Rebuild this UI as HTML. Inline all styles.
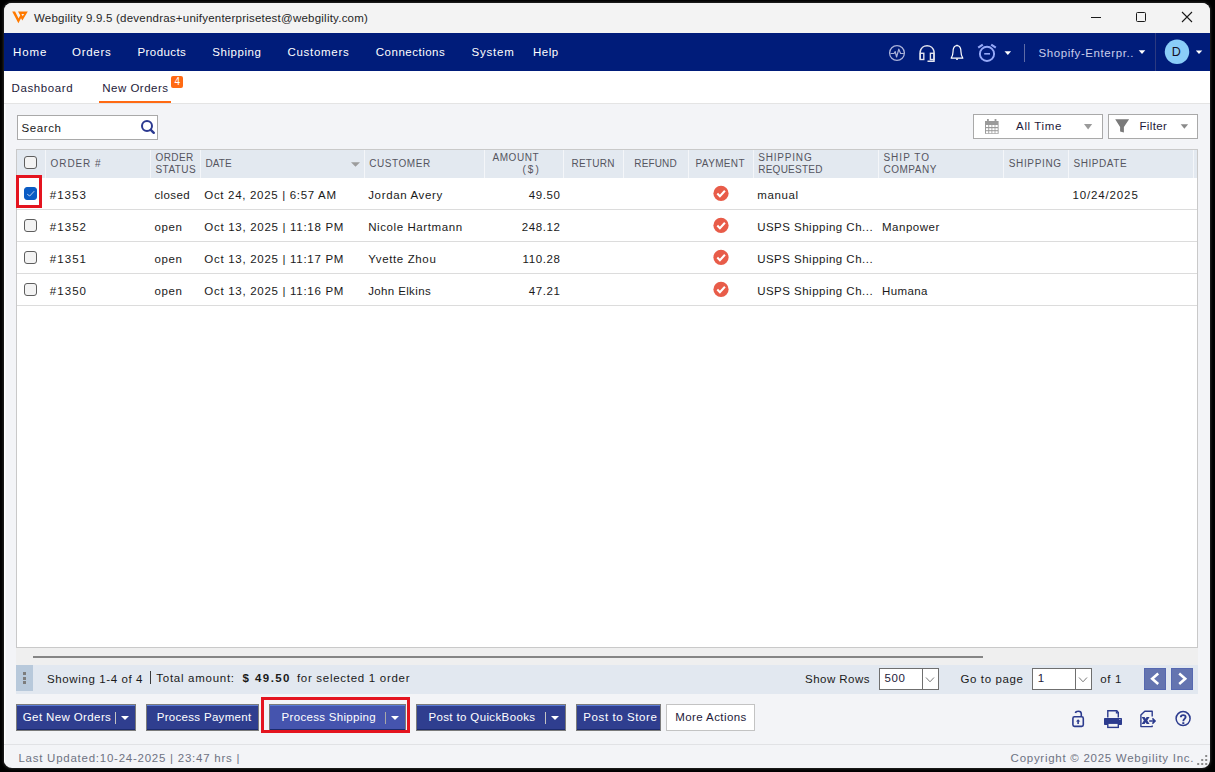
<!DOCTYPE html>
<html><head><meta charset="utf-8">
<style>
*{margin:0;padding:0;box-sizing:border-box}
html,body{width:1215px;height:772px;overflow:hidden;background:#000}
.shadow{position:absolute;left:4px;top:3px;width:1206px;height:765px;border-radius:8px;box-shadow:0 0 2.5px 0.5px rgba(70,70,70,.55)}
body{position:relative;font-family:"Liberation Sans",sans-serif}
.win{position:absolute;left:4px;top:3px;width:1206px;height:765px;border-radius:8px;overflow:hidden;background:#f3f4f7}
.in{position:absolute;left:-4px;top:-3px;width:1215px;height:772px}
.a{position:absolute}
.t{position:absolute;white-space:nowrap;line-height:1}
.btn{position:absolute;top:704px;height:27px;background:#2f3e8f;border:1px solid #7b7b7b;box-shadow:inset 0 1px 0 #5a7bd6,inset 0 -1px 0 #1c2a6c}
.cb{position:absolute;left:24px;width:13px;height:13px;border:1.3px solid #5e5e5e;border-radius:3px;background:#f3f3f3}
.vsep{position:absolute;top:150px;height:28px;width:1px;background:#f4f6f9}
.hl{position:absolute;left:17px;width:1180px;height:1px;background:#dcdcdc}
.car{position:absolute;width:0;height:0;border-left:4px solid transparent;border-right:4px solid transparent;border-top:4.6px solid #fff}
</style></head><body>
<div class="shadow"></div>
<div class="win"><div class="in">
<!-- title bar -->
<div class="a" style="left:0;top:0;width:1215px;height:33px;background:#f3f3f3"></div>
<svg class="a" style="left:0;top:0" width="40" height="33" viewBox="0 0 40 33">
 <path d="M12.2 11.5 L15.1 11.5 L18.6 18.4 L20.2 15.3 L18 11.5 L27.8 11.5 L22.4 20.6 L21 18.2 L18.4 23.2 Z" fill="#ff7a00"/>
 <path d="M21.4 14.1 L24.1 14.1 L22.7 16.3 Z" fill="#f3f3f3"/>
</svg>
<!-- window controls -->
<div class="a" style="left:1091px;top:17px;width:10px;height:1px;background:#1a1a1a"></div>
<div class="a" style="left:1136px;top:12px;width:10px;height:10px;border:1px solid #1a1a1a;border-radius:1.5px"></div>
<svg class="a" style="left:1180px;top:10px" width="14" height="14" viewBox="0 0 14 14"><path d="M2 2 L12 12 M12 2 L2 12" stroke="#1a1a1a" stroke-width="1.1"/></svg>
<!-- nav bar -->
<div class="a" style="left:0;top:33px;width:1215px;height:38px;background:#001c7a"></div>
<svg class="a" style="left:880px;top:33px" width="335" height="38" viewBox="880 33 335 38">
 <circle cx="897" cy="53" r="7.4" fill="none" stroke="#aab2d9" stroke-width="1.3"/>
 <path d="M890.5 53.5 L894 53.5 L895.2 51.6 L896.6 57 L898.8 49.2 L900.6 53.5 L903.8 53.5" fill="none" stroke="#aab2d9" stroke-width="1.2" stroke-linejoin="round"/>
 <path d="M920.2 59.5 L920.2 51.5 A7 7 0 0 1 934 51.5 L934 61.3 L927.5 61.3" fill="none" stroke="#e2e3ee" stroke-width="1.5"/>
 <rect x="920.2" y="53.3" width="3.6" height="6.2" fill="none" stroke="#e2e3ee" stroke-width="1.4"/>
 <rect x="930.4" y="53.3" width="3.6" height="6.2" fill="none" stroke="#e2e3ee" stroke-width="1.4"/>
 <path d="M957 45.6 C953.5 45.6 953 49 953 52 C953 55 952 57 951.2 58.2 L962.8 58.2 C962 57 961 55 961 52 C961 49 960.5 45.6 957 45.6 Z" fill="none" stroke="#ffffff" stroke-width="1.2" stroke-linejoin="round"/>
 <path d="M957 58.5 L957 60" stroke="#fff" stroke-width="1.6"/><path d="M957 44.8 L957 46" stroke="#fff" stroke-width="1.4"/>
 <circle cx="987" cy="53.9" r="7.1" fill="none" stroke="#95a9f8" stroke-width="1.9"/>
 <rect x="984.2" y="53" width="5.8" height="1.6" fill="#93a7f7"/>
 <path d="M978.2 47.6 L982.8 44.6 M991.2 44.6 L995.8 47.6" stroke="#93a7f7" stroke-width="2.2"/>
 <path d="M1004.5 51.3 L1011.1 51.3 L1007.8 55.1 Z" fill="#fff"/>
 <rect x="1024" y="44" width="1" height="18" fill="#5e6ba6"/>
 <path d="M1138.7 50.3 L1145.3 50.3 L1142 54 Z" fill="#fff"/>
 <rect x="1155" y="33" width="1" height="38" fill="#2c3a80"/>
 <circle cx="1177" cy="51.8" r="12.25" fill="#8acdf8"/>
 <path d="M1195.8 50.6 L1202.3 50.6 L1199 54.1 Z" fill="#fff"/>
</svg>
<!-- tab bar -->
<div class="a" style="left:0;top:71px;width:1215px;height:32px;background:#fff"></div>
<div class="a" style="left:0;top:103px;width:1215px;height:1px;background:#e4e4e4"></div>
<div class="a" style="left:99px;top:101px;width:72px;height:2px;background:#ff6a13"></div>
<div class="a" style="left:171px;top:76px;width:12px;height:12px;background:#ff6a13;border-radius:2px"></div>
<!-- search -->
<div class="a" style="left:17px;top:115px;width:141px;height:25px;border:1px solid #a9a9a9;background:#fff"></div>
<svg class="a" style="left:135px;top:115px" width="25" height="25" viewBox="135 115 25 25">
 <circle cx="147" cy="126" r="5" fill="none" stroke="#2b3990" stroke-width="2"/>
 <path d="M150.8 129.8 L153.8 132.8" stroke="#2b3990" stroke-width="2.4" stroke-linecap="round"/>
</svg>
<!-- all time / filter -->
<div class="a" style="left:973px;top:114px;width:130px;height:25px;border:1px solid #a9a9a9;background:#fff"></div>
<div class="a" style="left:1108px;top:114px;width:90px;height:25px;border:1px solid #a9a9a9;background:#fff"></div>
<svg class="a" style="left:980px;top:114px" width="220" height="25" viewBox="980 114 220 25">
 <rect x="985" y="121" width="13.6" height="12.8" fill="#9a9a9a"/>
 <rect x="987" y="119" width="1.8" height="3" fill="#9a9a9a"/><rect x="994.6" y="119" width="1.8" height="3" fill="#9a9a9a"/>
 <g fill="#fff">
  <rect x="986" y="125" width="2.3" height="2"/><rect x="989.2" y="125" width="2.3" height="2"/><rect x="992.3" y="125" width="2.3" height="2"/><rect x="995.4" y="125" width="2.3" height="2"/>
  <rect x="986" y="128.2" width="2.3" height="2"/><rect x="989.2" y="128.2" width="2.3" height="2"/><rect x="992.3" y="128.2" width="2.3" height="2"/><rect x="995.4" y="128.2" width="2.3" height="2"/>
  <rect x="986" y="131.2" width="2.3" height="2"/><rect x="989.2" y="131.2" width="2.3" height="2"/><rect x="992.3" y="131.2" width="2.3" height="2"/><rect x="995.4" y="131.2" width="2.3" height="2"/>
 </g>
 <path d="M1084 124 L1092.2 124 L1088.1 129.5 Z" fill="#9a9a9a"/>
 <path d="M1115.2 119.2 L1129.1 119.2 L1123.9 126.9 L1123.9 132.6 L1120.1 131.6 L1120.1 126.9 Z" fill="#7a7a7a"/>
 <path d="M1180.7 124.3 L1188.1 124.3 L1184.4 128.8 Z" fill="#8a8a8a"/>
</svg>
<!-- table -->
<div class="a" style="left:16px;top:149px;width:1182px;height:499px;border:1px solid #c9c9c9;background:#fff"></div>
<div class="a" style="left:17px;top:150px;width:1180px;height:28px;background:#e3e9f0"></div>
<div class="vsep" style="left:45px"></div><div class="vsep" style="left:150px"></div><div class="vsep" style="left:200px"></div>
<div class="vsep" style="left:364px"></div><div class="vsep" style="left:484px"></div><div class="vsep" style="left:563px"></div>
<div class="vsep" style="left:623px"></div><div class="vsep" style="left:688px"></div><div class="vsep" style="left:753px"></div>
<div class="vsep" style="left:878px"></div><div class="vsep" style="left:1003px"></div><div class="vsep" style="left:1068px"></div>
<div class="vsep" style="left:1193px"></div>
<svg class="a" style="left:350px;top:160px" width="12" height="8" viewBox="350 160 12 8"><path d="M351 162.2 L360 162.2 L355.5 166.8 Z" fill="#9c9c9c"/></svg>
<div class="hl" style="top:209px"></div><div class="hl" style="top:241px"></div><div class="hl" style="top:273px"></div><div class="hl" style="top:305px"></div>
<div class="cb" style="top:156px"></div>
<div class="cb" style="top:187px;background:#0b5cc4;border-color:#0b5cc4"></div>
<svg class="a" style="left:24px;top:187px" width="13" height="13" viewBox="24 187 13 13"><path d="M27.2 194.2 L29.7 196 L34.2 191.2" fill="none" stroke="#cfdcf3" stroke-width="0.9"/></svg>
<div class="cb" style="top:219px"></div><div class="cb" style="top:251px"></div><div class="cb" style="top:283px"></div>
<div class="a" style="left:16px;top:175px;width:26px;height:33px;border:3px solid #e4141f"></div>
<svg class="a" style="left:705px;top:178px" width="32" height="128" viewBox="705 178 32 128">
 <g transform="translate(0 0)"><circle cx="721" cy="193.4" r="7.6" fill="#e85c49"/><path d="M717.3 193.6 L719.9 196.2 L724.9 190.8" fill="none" stroke="#fff" stroke-width="2.1"/></g>
 <g transform="translate(0 32)"><circle cx="721" cy="193.4" r="7.6" fill="#e85c49"/><path d="M717.3 193.6 L719.9 196.2 L724.9 190.8" fill="none" stroke="#fff" stroke-width="2.1"/></g>
 <g transform="translate(0 64)"><circle cx="721" cy="193.4" r="7.6" fill="#e85c49"/><path d="M717.3 193.6 L719.9 196.2 L724.9 190.8" fill="none" stroke="#fff" stroke-width="2.1"/></g>
 <g transform="translate(0 96)"><circle cx="721" cy="193.4" r="7.6" fill="#e85c49"/><path d="M717.3 193.6 L719.9 196.2 L724.9 190.8" fill="none" stroke="#fff" stroke-width="2.1"/></g>
 
</svg>
<!-- below table strip + scrollbar -->
<div class="a" style="left:16px;top:648px;width:1182px;height:17px;background:#efefef"></div>
<div class="a" style="left:33px;top:655.6px;width:950px;height:2.4px;background:#858585"></div>
<!-- status bar -->
<div class="a" style="left:16px;top:665px;width:1182px;height:29px;background:#e2e8f0"></div>
<div class="a" style="left:16px;top:665px;width:17px;height:26px;background:#b8c9db"></div>
<div class="a" style="left:23px;top:672px;width:3px;height:3px;background:#7d7d7d"></div>
<div class="a" style="left:23px;top:677px;width:3px;height:3px;background:#7d7d7d"></div>
<div class="a" style="left:23px;top:681px;width:3px;height:3px;background:#7d7d7d"></div>
<div class="a" style="left:150px;top:671px;width:1px;height:13px;background:#3a3a3a"></div>
<div class="a" style="left:879px;top:668px;width:60px;height:22px;border:1px solid #6f6f6f;background:#fff"></div>
<div class="a" style="left:922px;top:668px;width:1px;height:22px;background:#6f6f6f"></div>
<div class="a" style="left:1032px;top:668px;width:60px;height:22px;border:1px solid #6f6f6f;background:#fff"></div>
<div class="a" style="left:1075px;top:668px;width:1px;height:22px;background:#6f6f6f"></div>
<svg class="a" style="left:920px;top:670px" width="180" height="20" viewBox="920 670 180 20">
 <path d="M926 677.5 L930 681.8 L934 677.5" fill="none" stroke="#7a7a7a" stroke-width="1"/>
 <path d="M1079 677.5 L1083 681.8 L1087 677.5" fill="none" stroke="#7a7a7a" stroke-width="1"/>
</svg>
<div class="a" style="left:1144px;top:668px;width:22px;height:22px;background:#6474b0;border:1px solid #5668b0"></div>
<div class="a" style="left:1171px;top:668px;width:22px;height:22px;background:#6474b0;border:1px solid #5668b0"></div>
<svg class="a" style="left:1144px;top:668px" width="50" height="22" viewBox="1144 668 50 22">
 <path d="M1158.2 673.6 L1152.2 678.8 L1158.2 684" fill="none" stroke="#fff" stroke-width="2.6"/>
 <path d="M1179.2 673.6 L1185.2 678.8 L1179.2 684" fill="none" stroke="#fff" stroke-width="2.6"/>
</svg>
<!-- buttons -->
<div class="btn" style="left:16px;width:120px"></div>
<div class="btn" style="left:146px;width:113px"></div>
<div class="btn" style="left:269px;width:137px;background:#4554ae"></div>
<div class="btn" style="left:416px;width:150px"></div>
<div class="btn" style="left:576px;width:85px"></div>
<div class="a" style="left:666px;top:704px;width:89px;height:27px;background:#fff;border:1px solid #c3c3c3"></div>
<div class="a" style="left:115px;top:712px;width:1px;height:12px;background:#c4c4c4"></div>
<div class="a" style="left:385px;top:712px;width:1px;height:12px;background:#a8a8a8"></div>
<div class="a" style="left:545px;top:712px;width:1px;height:12px;background:#c4c4c4"></div>
<div class="car" style="left:121.4px;top:715.8px"></div>
<div class="car" style="left:391.4px;top:716px"></div>
<div class="car" style="left:551.3px;top:715.8px"></div>
<div class="a" style="left:261px;top:697px;width:149px;height:36px;border:3px solid #e4141f"></div>
<!-- right icons -->
<svg class="a" style="left:1065px;top:705px" width="135" height="28" viewBox="1065 705 135 28">
 <g fill="none" stroke="#2c3b8e">
  <rect x="1072.9" y="716.8" width="10.4" height="9.6" rx="1.6" stroke-width="1.6"/>
  <path d="M1075.4 713 Q1075.8 711.2 1078.4 711.2 Q1081.3 711.2 1081.3 713.8 L1081.3 716.6" stroke-width="1.6"/>
 </g>
 <path d="M1078.1 719.2 L1080.3 721.4 L1078.9 721.4 L1078.9 724 L1077.3 724 L1077.3 721.4 L1075.9 721.4 Z" fill="#2c3b8e"/>
 <path d="M1107.8 717.5 L1107.8 710.8 L1116.8 710.8 L1118.3 712.6 L1118.3 717.5" fill="none" stroke="#2c3b8e" stroke-width="1.4"/>
 <path d="M1115.8 710.6 L1118.6 713.6 L1115.8 713.6 Z" fill="#2c3b8e"/>
 <rect x="1104" y="718" width="18" height="7" rx="0.8" fill="#2c3b8e"/>
 <rect x="1107.8" y="723.2" width="10.5" height="4.2" fill="#f2f3f5" stroke="#2c3b8e" stroke-width="1.4"/>
 <rect x="1119" y="719" width="1.6" height="1" fill="#8c97c8"/>
 <path d="M1152.2 716.4 L1152.2 711.2 L1144.8 711.2 L1140.9 715 L1140.9 726.6 L1152.2 726.6 L1152.2 725.6" fill="none" stroke="#2c3b8e" stroke-width="1.4" stroke-linejoin="round"/>
 <path d="M1141.6 717 L1144.6 717 L1145.6 718.8 L1146.6 717 L1149.6 717 L1147.3 720.5 L1149.6 724 L1146.6 724 L1145.6 722.2 L1144.6 724 L1141.6 724 L1143.9 720.5 Z" fill="#2c3b8e"/>
 <path d="M1149.2 721 L1154.8 721 M1152.4 718.4 L1155.1 721 L1152.4 723.6" fill="none" stroke="#2c3b8e" stroke-width="1.5"/>
 <circle cx="1183.1" cy="718.6" r="7" fill="none" stroke="#2c3b8e" stroke-width="1.5"/>
 <path d="M1180.8 717.3 C1180.8 714.4 1185.6 714.4 1185.6 717 C1185.6 718.8 1183.3 719 1183.3 721.2" fill="none" stroke="#2c3b8e" stroke-width="1.9"/>
 <rect x="1182.3" y="722.2" width="2" height="1.8" fill="#2c3b8e"/>
</svg>
<!-- footer -->
<div class="a" style="left:4px;top:104px;width:1px;height:664px;background:#ffffff"></div>
<div class="a" style="left:5px;top:104px;width:1px;height:640px;background:#f8f9fa"></div>
<div class="a" style="left:0;top:744px;width:1215px;height:1px;background:#e1e2e5"></div>
<svg class="a" style="left:1196px;top:754px" width="14" height="14" viewBox="1196 754 14 14">
 <g fill="#8a8a8a"><rect x="1205.2" y="755" width="2" height="2"/><rect x="1201.2" y="759" width="2" height="2"/><rect x="1205.2" y="759" width="2" height="2"/><rect x="1197.2" y="763" width="2" height="2"/><rect x="1201.2" y="763" width="2" height="2"/><rect x="1205.2" y="763" width="2" height="2"/></g>
</svg>
<div class="t" style="left:34.00px;top:13.00px;font-size:11.5px;letter-spacing:0.226px;color:#262626">Webgility 9.9.5 (devendras+unifyenterprisetest@webgility.com)</div>
<div class="t" style="left:13.00px;top:47.00px;font-size:11.5px;letter-spacing:0.907px;color:#ffffff">Home</div>
<div class="t" style="left:72.00px;top:47.00px;font-size:11.5px;letter-spacing:0.721px;color:#ffffff">Orders</div>
<div class="t" style="left:137.50px;top:47.00px;font-size:11.5px;letter-spacing:0.410px;color:#ffffff">Products</div>
<div class="t" style="left:212.30px;top:47.00px;font-size:11.5px;letter-spacing:0.548px;color:#ffffff">Shipping</div>
<div class="t" style="left:287.40px;top:47.00px;font-size:11.5px;letter-spacing:0.719px;color:#ffffff">Customers</div>
<div class="t" style="left:375.80px;top:47.00px;font-size:11.5px;letter-spacing:0.502px;color:#ffffff">Connections</div>
<div class="t" style="left:471.40px;top:47.00px;font-size:11.5px;letter-spacing:0.828px;color:#ffffff">System</div>
<div class="t" style="left:533.00px;top:47.00px;font-size:11.5px;letter-spacing:0.515px;color:#ffffff">Help</div>
<div class="t" style="left:1038.50px;top:48.00px;font-size:11.5px;letter-spacing:0.578px;color:#c9cdeb">Shopify-Enterpr..</div>
<div class="t" style="left:1171.70px;top:46.00px;font-size:12.5px;letter-spacing:0.000px;color:#150f25">D</div>
<div class="t" style="left:174.50px;top:77.00px;font-size:10px;letter-spacing:0.529px;color:#ffffff">4</div>
<div class="t" style="left:11.50px;top:83.00px;font-size:11.5px;letter-spacing:0.617px;color:#1e1a3a">Dashboard</div>
<div class="t" style="left:102.20px;top:83.00px;font-size:11.5px;letter-spacing:0.500px;color:#1e1a3a">New Orders</div>
<div class="t" style="left:21.60px;top:123.00px;font-size:11.5px;letter-spacing:0.572px;color:#1a1a1a">Search</div>
<div class="t" style="left:1016.10px;top:121.00px;font-size:11.5px;letter-spacing:0.613px;color:#1e1a3a">All Time</div>
<div class="t" style="left:1139.40px;top:121.00px;font-size:11.5px;letter-spacing:0.375px;color:#1e1a3a">Filter</div>
<div class="t" style="left:50.60px;top:159.00px;font-size:10px;letter-spacing:0.901px;color:#55555f">ORDER #</div>
<div class="t" style="left:155.50px;top:153.00px;font-size:10px;letter-spacing:0.402px;color:#55555f">ORDER</div>
<div class="t" style="left:155.50px;top:165.00px;font-size:10px;letter-spacing:0.441px;color:#55555f">STATUS</div>
<div class="t" style="left:205.60px;top:159.00px;font-size:10px;letter-spacing:0.047px;color:#55555f">DATE</div>
<div class="t" style="left:369.20px;top:159.00px;font-size:10px;letter-spacing:0.569px;color:#55555f">CUSTOMER</div>
<div class="t" style="left:492.40px;top:153.00px;font-size:10px;letter-spacing:0.576px;color:#55555f">AMOUNT</div>
<div class="t" style="left:522.40px;top:165.00px;font-size:10px;letter-spacing:2.104px;color:#55555f">($)</div>
<div class="t" style="left:571.40px;top:159.00px;font-size:10px;letter-spacing:0.291px;color:#55555f">RETURN</div>
<div class="t" style="left:634.30px;top:159.00px;font-size:10px;letter-spacing:0.151px;color:#55555f">REFUND</div>
<div class="t" style="left:695.60px;top:159.00px;font-size:10px;letter-spacing:0.342px;color:#55555f">PAYMENT</div>
<div class="t" style="left:758.20px;top:153.00px;font-size:10px;letter-spacing:0.813px;color:#55555f">SHIPPING</div>
<div class="t" style="left:758.20px;top:165.00px;font-size:10px;letter-spacing:0.261px;color:#55555f">REQUESTED</div>
<div class="t" style="left:883.40px;top:153.00px;font-size:10px;letter-spacing:1.042px;color:#55555f">SHIP TO</div>
<div class="t" style="left:883.40px;top:165.00px;font-size:10px;letter-spacing:0.525px;color:#55555f">COMPANY</div>
<div class="t" style="left:1008.70px;top:159.00px;font-size:10px;letter-spacing:0.656px;color:#55555f">SHIPPING</div>
<div class="t" style="left:1073.60px;top:159.00px;font-size:10px;letter-spacing:0.529px;color:#55555f">SHIPDATE</div>
<div class="t" style="left:49.80px;top:190.00px;font-size:11.5px;letter-spacing:1.004px;color:#1a1a1a">#1353</div>
<div class="t" style="left:154.40px;top:190.00px;font-size:11.5px;letter-spacing:0.391px;color:#1a1a1a">closed</div>
<div class="t" style="left:204.30px;top:190.00px;font-size:11.5px;letter-spacing:0.682px;color:#1a1a1a">Oct 24, 2025 | 6:57 AM</div>
<div class="t" style="left:368.20px;top:190.00px;font-size:11.5px;letter-spacing:0.655px;color:#1a1a1a">Jordan Avery</div>
<div class="t" style="left:528.76px;top:190.00px;font-size:11.5px;letter-spacing:0.613px;color:#1a1a1a">49.50</div>
<div class="t" style="left:757.20px;top:190.00px;font-size:11.5px;letter-spacing:0.613px;color:#1a1a1a">manual</div>
<div class="t" style="left:1072.40px;top:190.00px;font-size:11.5px;letter-spacing:0.871px;color:#1a1a1a">10/24/2025</div>
<div class="t" style="left:49.80px;top:222.00px;font-size:11.5px;letter-spacing:1.054px;color:#1a1a1a">#1352</div>
<div class="t" style="left:154.40px;top:222.00px;font-size:11.5px;letter-spacing:0.638px;color:#1a1a1a">open</div>
<div class="t" style="left:204.30px;top:222.00px;font-size:11.5px;letter-spacing:0.704px;color:#1a1a1a">Oct 13, 2025 | 11:18 PM</div>
<div class="t" style="left:368.20px;top:222.00px;font-size:11.5px;letter-spacing:0.589px;color:#1a1a1a">Nicole Hartmann</div>
<div class="t" style="left:521.76px;top:222.00px;font-size:11.5px;letter-spacing:0.613px;color:#1a1a1a">248.12</div>
<div class="t" style="left:757.20px;top:222.00px;font-size:11.5px;letter-spacing:0.480px;color:#1a1a1a">USPS Shipping Ch...</div>
<div class="t" style="left:882.00px;top:222.00px;font-size:11.5px;letter-spacing:0.520px;color:#1a1a1a">Manpower</div>
<div class="t" style="left:49.80px;top:254.00px;font-size:11.5px;letter-spacing:1.054px;color:#1a1a1a">#1351</div>
<div class="t" style="left:154.40px;top:254.00px;font-size:11.5px;letter-spacing:0.638px;color:#1a1a1a">open</div>
<div class="t" style="left:204.30px;top:254.00px;font-size:11.5px;letter-spacing:0.704px;color:#1a1a1a">Oct 13, 2025 | 11:17 PM</div>
<div class="t" style="left:368.20px;top:254.00px;font-size:11.5px;letter-spacing:0.622px;color:#1a1a1a">Yvette Zhou</div>
<div class="t" style="left:522.61px;top:254.00px;font-size:11.5px;letter-spacing:0.613px;color:#1a1a1a">110.28</div>
<div class="t" style="left:757.20px;top:254.00px;font-size:11.5px;letter-spacing:0.480px;color:#1a1a1a">USPS Shipping Ch...</div>
<div class="t" style="left:49.80px;top:286.00px;font-size:11.5px;letter-spacing:1.054px;color:#1a1a1a">#1350</div>
<div class="t" style="left:154.40px;top:286.00px;font-size:11.5px;letter-spacing:0.638px;color:#1a1a1a">open</div>
<div class="t" style="left:204.30px;top:286.00px;font-size:11.5px;letter-spacing:0.704px;color:#1a1a1a">Oct 13, 2025 | 11:16 PM</div>
<div class="t" style="left:368.20px;top:286.00px;font-size:11.5px;letter-spacing:0.364px;color:#1a1a1a">John Elkins</div>
<div class="t" style="left:528.76px;top:286.00px;font-size:11.5px;letter-spacing:0.613px;color:#1a1a1a">47.21</div>
<div class="t" style="left:757.20px;top:286.00px;font-size:11.5px;letter-spacing:0.480px;color:#1a1a1a">USPS Shipping Ch...</div>
<div class="t" style="left:882.00px;top:286.00px;font-size:11.5px;letter-spacing:0.386px;color:#1a1a1a">Humana</div>
<div class="t" style="left:47.00px;top:674.00px;font-size:11.5px;letter-spacing:0.613px;color:#1a1a1a">Showing 1-4 of 4</div>
<div class="t" style="left:156.30px;top:673.00px;font-size:11.5px;letter-spacing:0.721px;color:#1a1a1a">Total amount:</div>
<div class="t" style="left:242.50px;top:673.00px;font-size:11.5px;letter-spacing:1.438px;color:#1a1a1a;font-weight:bold">$ 49.50</div>
<div class="t" style="left:296.90px;top:673.00px;font-size:11.5px;letter-spacing:0.713px;color:#1a1a1a">for selected 1 order</div>
<div class="t" style="left:805.10px;top:674.00px;font-size:11.5px;letter-spacing:0.454px;color:#1a1a1a">Show Rows</div>
<div class="t" style="left:884.40px;top:673.00px;font-size:11.5px;letter-spacing:0.604px;color:#1e1a3a">500</div>
<div class="t" style="left:960.40px;top:674.00px;font-size:11.5px;letter-spacing:0.632px;color:#1a1a1a">Go to page</div>
<div class="t" style="left:1037.70px;top:673.00px;font-size:11.5px;letter-spacing:0.613px;color:#1e1a3a">1</div>
<div class="t" style="left:1100.20px;top:674.00px;font-size:11.5px;letter-spacing:0.671px;color:#1a1a1a">of 1</div>
<div class="t" style="left:22.80px;top:712.00px;font-size:11.5px;letter-spacing:0.383px;color:#ffffff">Get New Orders</div>
<div class="t" style="left:156.70px;top:712.00px;font-size:11.5px;letter-spacing:0.313px;color:#ffffff">Process Payment</div>
<div class="t" style="left:281.60px;top:712.00px;font-size:11.5px;letter-spacing:0.307px;color:#ffffff">Process Shipping</div>
<div class="t" style="left:428.40px;top:712.00px;font-size:11.5px;letter-spacing:0.371px;color:#ffffff">Post to QuickBooks</div>
<div class="t" style="left:583.30px;top:712.00px;font-size:11.5px;letter-spacing:0.593px;color:#ffffff">Post to Store</div>
<div class="t" style="left:675.20px;top:712.00px;font-size:11.5px;letter-spacing:0.422px;color:#1e1a3a">More Actions</div>
<div class="t" style="left:18.40px;top:753.00px;font-size:11.5px;letter-spacing:0.754px;color:#6e7282">Last Updated:10-24-2025 | 23:47 hrs |</div>
<div class="t" style="left:1010.60px;top:753.00px;font-size:11.5px;letter-spacing:0.729px;color:#6e7282">Copyright © 2025 Webgility Inc.</div>
</div></div>
</body></html>
